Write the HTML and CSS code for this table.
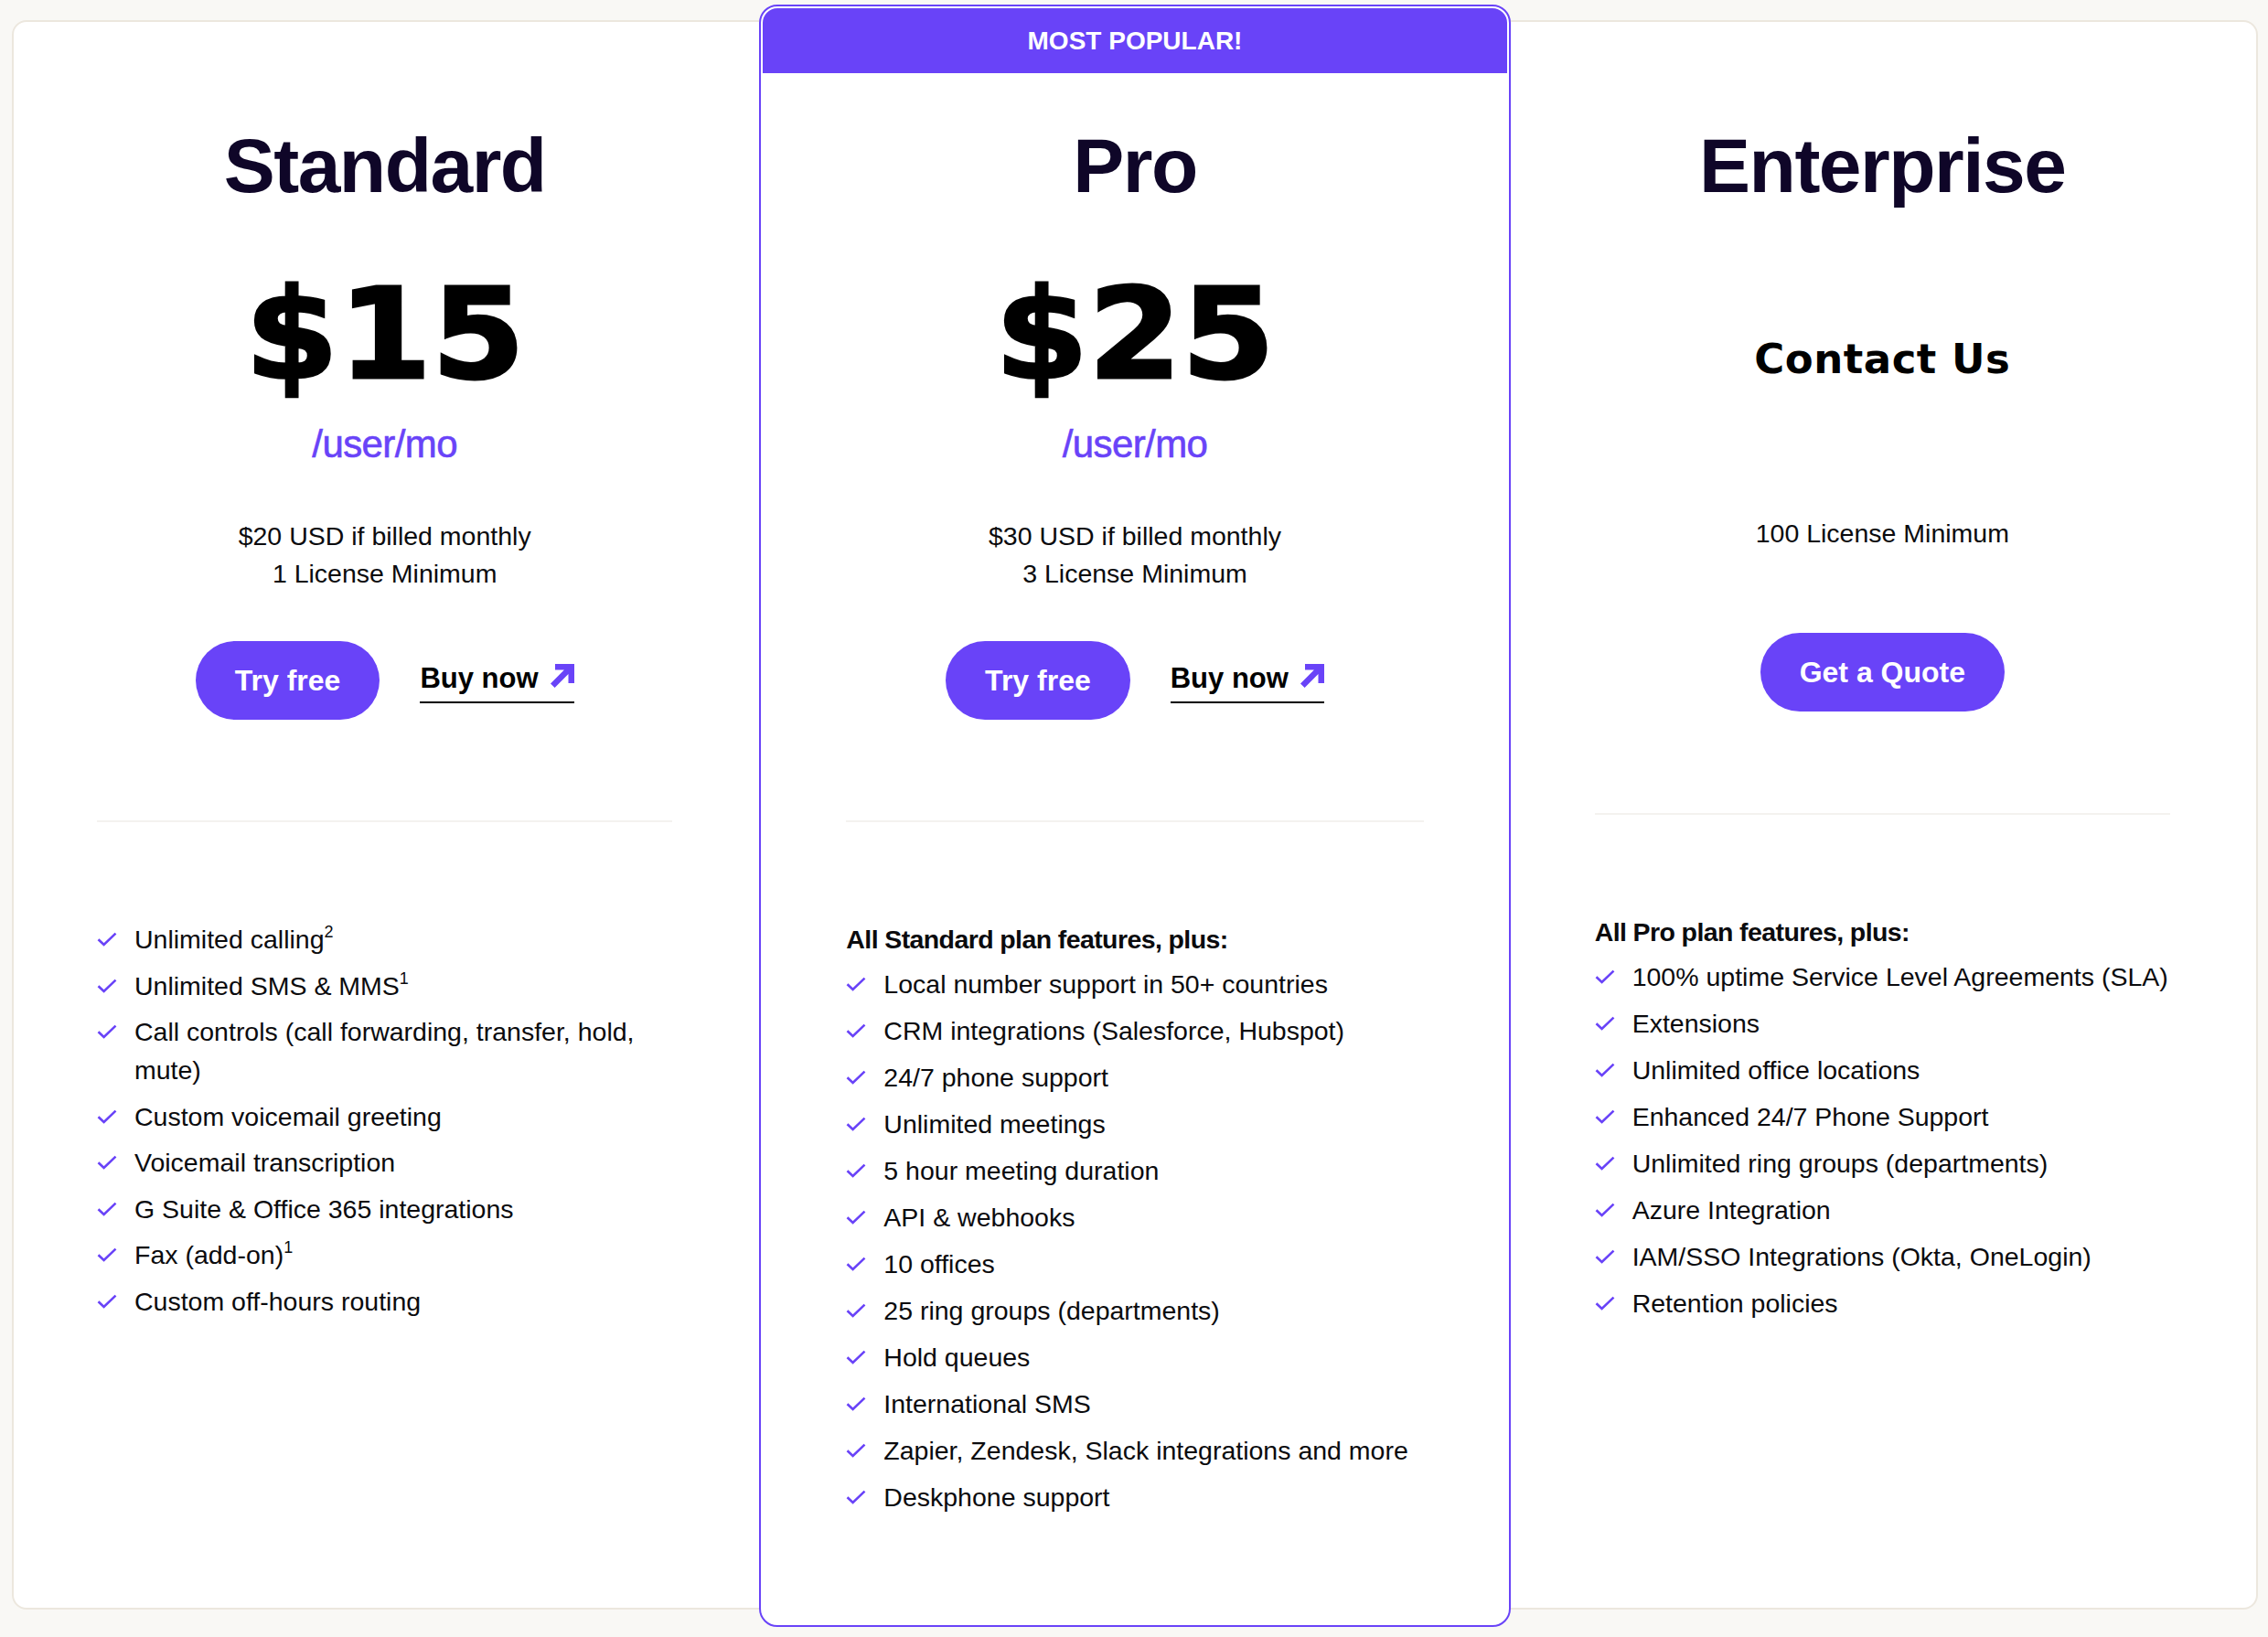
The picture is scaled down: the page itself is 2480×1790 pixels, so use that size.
FILE: index.html
```html
<!DOCTYPE html>
<html lang="en">
<head>
<meta charset="utf-8">
<title>Pricing</title>
<link rel="stylesheet" href="styles.css">
</head>
<body>
<div class="page">
  <div class="plans">
    <section class="plan plan--standard">
      <div class="plan-body">
        <h2 class="plan-name">Standard</h2>
        <div class="price">$15</div>
        <div class="unit">/user/mo</div>
        <p class="billing">$20 USD if billed monthly<br>1 License Minimum</p>
        <div class="actions">
          <a class="btn" href="#">Try free</a>
          <a class="buy" href="#">Buy now <svg class="arrow" viewBox="0 0 26 26" width="26" height="26"><polygon points="5,0 26,0 26,21 19.5,21 19.5,11.1 4.6,26 0,21.4 14.9,6.5 5,6.5" fill="#6943f8"/></svg></a>
        </div>
        <hr class="divider">
        <ul class="features">
          <li><svg class="check" viewBox="0 0 22 16" width="22" height="16"><path d="M1.5 8.2 L7.6 14 L20.5 1.6" fill="none" stroke="#6943f8" stroke-width="2.6"/></svg><span>Unlimited calling<sup>2</sup></span></li>
          <li><svg class="check" viewBox="0 0 22 16" width="22" height="16"><path d="M1.5 8.2 L7.6 14 L20.5 1.6" fill="none" stroke="#6943f8" stroke-width="2.6"/></svg><span>Unlimited SMS &amp; MMS<sup>1</sup></span></li>
          <li><svg class="check" viewBox="0 0 22 16" width="22" height="16"><path d="M1.5 8.2 L7.6 14 L20.5 1.6" fill="none" stroke="#6943f8" stroke-width="2.6"/></svg><span>Call controls (call forwarding, transfer, hold, mute)</span></li>
          <li><svg class="check" viewBox="0 0 22 16" width="22" height="16"><path d="M1.5 8.2 L7.6 14 L20.5 1.6" fill="none" stroke="#6943f8" stroke-width="2.6"/></svg><span>Custom voicemail greeting</span></li>
          <li><svg class="check" viewBox="0 0 22 16" width="22" height="16"><path d="M1.5 8.2 L7.6 14 L20.5 1.6" fill="none" stroke="#6943f8" stroke-width="2.6"/></svg><span>Voicemail transcription</span></li>
          <li><svg class="check" viewBox="0 0 22 16" width="22" height="16"><path d="M1.5 8.2 L7.6 14 L20.5 1.6" fill="none" stroke="#6943f8" stroke-width="2.6"/></svg><span>G Suite &amp; Office 365 integrations</span></li>
          <li><svg class="check" viewBox="0 0 22 16" width="22" height="16"><path d="M1.5 8.2 L7.6 14 L20.5 1.6" fill="none" stroke="#6943f8" stroke-width="2.6"/></svg><span>Fax (add-on)<sup>1</sup></span></li>
          <li><svg class="check" viewBox="0 0 22 16" width="22" height="16"><path d="M1.5 8.2 L7.6 14 L20.5 1.6" fill="none" stroke="#6943f8" stroke-width="2.6"/></svg><span>Custom off-hours routing</span></li>
        </ul>
      </div>
    </section>

    <section class="plan plan--pro">
      <div class="badge">MOST POPULAR!</div>
      <div class="plan-body">
        <h2 class="plan-name">Pro</h2>
        <div class="price">$25</div>
        <div class="unit">/user/mo</div>
        <p class="billing">$30 USD if billed monthly<br>3 License Minimum</p>
        <div class="actions">
          <a class="btn" href="#">Try free</a>
          <a class="buy" href="#">Buy now <svg class="arrow" viewBox="0 0 26 26" width="26" height="26"><polygon points="5,0 26,0 26,21 19.5,21 19.5,11.1 4.6,26 0,21.4 14.9,6.5 5,6.5" fill="#6943f8"/></svg></a>
        </div>
        <hr class="divider">
        <p class="features-title">All Standard plan features, plus:</p>
        <ul class="features">
          <li><svg class="check" viewBox="0 0 22 16" width="22" height="16"><path d="M1.5 8.2 L7.6 14 L20.5 1.6" fill="none" stroke="#6943f8" stroke-width="2.6"/></svg><span>Local number support in 50+ countries</span></li>
          <li><svg class="check" viewBox="0 0 22 16" width="22" height="16"><path d="M1.5 8.2 L7.6 14 L20.5 1.6" fill="none" stroke="#6943f8" stroke-width="2.6"/></svg><span>CRM integrations (Salesforce, Hubspot)</span></li>
          <li><svg class="check" viewBox="0 0 22 16" width="22" height="16"><path d="M1.5 8.2 L7.6 14 L20.5 1.6" fill="none" stroke="#6943f8" stroke-width="2.6"/></svg><span>24/7 phone support</span></li>
          <li><svg class="check" viewBox="0 0 22 16" width="22" height="16"><path d="M1.5 8.2 L7.6 14 L20.5 1.6" fill="none" stroke="#6943f8" stroke-width="2.6"/></svg><span>Unlimited meetings</span></li>
          <li><svg class="check" viewBox="0 0 22 16" width="22" height="16"><path d="M1.5 8.2 L7.6 14 L20.5 1.6" fill="none" stroke="#6943f8" stroke-width="2.6"/></svg><span>5 hour meeting duration</span></li>
          <li><svg class="check" viewBox="0 0 22 16" width="22" height="16"><path d="M1.5 8.2 L7.6 14 L20.5 1.6" fill="none" stroke="#6943f8" stroke-width="2.6"/></svg><span>API &amp; webhooks</span></li>
          <li><svg class="check" viewBox="0 0 22 16" width="22" height="16"><path d="M1.5 8.2 L7.6 14 L20.5 1.6" fill="none" stroke="#6943f8" stroke-width="2.6"/></svg><span>10 offices</span></li>
          <li><svg class="check" viewBox="0 0 22 16" width="22" height="16"><path d="M1.5 8.2 L7.6 14 L20.5 1.6" fill="none" stroke="#6943f8" stroke-width="2.6"/></svg><span>25 ring groups (departments)</span></li>
          <li><svg class="check" viewBox="0 0 22 16" width="22" height="16"><path d="M1.5 8.2 L7.6 14 L20.5 1.6" fill="none" stroke="#6943f8" stroke-width="2.6"/></svg><span>Hold queues</span></li>
          <li><svg class="check" viewBox="0 0 22 16" width="22" height="16"><path d="M1.5 8.2 L7.6 14 L20.5 1.6" fill="none" stroke="#6943f8" stroke-width="2.6"/></svg><span>International SMS</span></li>
          <li><svg class="check" viewBox="0 0 22 16" width="22" height="16"><path d="M1.5 8.2 L7.6 14 L20.5 1.6" fill="none" stroke="#6943f8" stroke-width="2.6"/></svg><span>Zapier, Zendesk, Slack integrations and more</span></li>
          <li><svg class="check" viewBox="0 0 22 16" width="22" height="16"><path d="M1.5 8.2 L7.6 14 L20.5 1.6" fill="none" stroke="#6943f8" stroke-width="2.6"/></svg><span>Deskphone support</span></li>
        </ul>
      </div>
    </section>

    <section class="plan plan--enterprise">
      <div class="plan-body">
        <h2 class="plan-name">Enterprise</h2>
        <div class="contact">Contact Us</div>
        <p class="billing billing--ent">100 License Minimum</p>
        <div class="actions actions--ent">
          <a class="btn" href="#">Get a Quote</a>
        </div>
        <hr class="divider divider--ent">
        <p class="features-title">All Pro plan features, plus:</p>
        <ul class="features">
          <li><svg class="check" viewBox="0 0 22 16" width="22" height="16"><path d="M1.5 8.2 L7.6 14 L20.5 1.6" fill="none" stroke="#6943f8" stroke-width="2.6"/></svg><span>100% uptime Service Level Agreements (SLA)</span></li>
          <li><svg class="check" viewBox="0 0 22 16" width="22" height="16"><path d="M1.5 8.2 L7.6 14 L20.5 1.6" fill="none" stroke="#6943f8" stroke-width="2.6"/></svg><span>Extensions</span></li>
          <li><svg class="check" viewBox="0 0 22 16" width="22" height="16"><path d="M1.5 8.2 L7.6 14 L20.5 1.6" fill="none" stroke="#6943f8" stroke-width="2.6"/></svg><span>Unlimited office locations</span></li>
          <li><svg class="check" viewBox="0 0 22 16" width="22" height="16"><path d="M1.5 8.2 L7.6 14 L20.5 1.6" fill="none" stroke="#6943f8" stroke-width="2.6"/></svg><span>Enhanced 24/7 Phone Support</span></li>
          <li><svg class="check" viewBox="0 0 22 16" width="22" height="16"><path d="M1.5 8.2 L7.6 14 L20.5 1.6" fill="none" stroke="#6943f8" stroke-width="2.6"/></svg><span>Unlimited ring groups (departments)</span></li>
          <li><svg class="check" viewBox="0 0 22 16" width="22" height="16"><path d="M1.5 8.2 L7.6 14 L20.5 1.6" fill="none" stroke="#6943f8" stroke-width="2.6"/></svg><span>Azure Integration</span></li>
          <li><svg class="check" viewBox="0 0 22 16" width="22" height="16"><path d="M1.5 8.2 L7.6 14 L20.5 1.6" fill="none" stroke="#6943f8" stroke-width="2.6"/></svg><span>IAM/SSO Integrations (Okta, OneLogin)</span></li>
          <li><svg class="check" viewBox="0 0 22 16" width="22" height="16"><path d="M1.5 8.2 L7.6 14 L20.5 1.6" fill="none" stroke="#6943f8" stroke-width="2.6"/></svg><span>Retention policies</span></li>
        </ul>
      </div>
    </section>
  </div>
</div>
</body>
</html>
```

FILE: styles.css
```css
* { box-sizing: border-box; }

html, body { margin: 0; padding: 0; }

body {
  background: #f9f8f5;
  font-family: "Liberation Sans", Arial, sans-serif;
  color: #0b0b0e;
}

.page {
  padding: 22px 11px 20px 13px;
}

.plans {
  display: grid;
  grid-template-columns: repeat(3, 1fr);
  background: #ffffff;
  border: 2px solid #ece7de;
  border-radius: 16px;
}

.plan {
  display: flex;
  flex-direction: column;
}

.plan-body {
  display: flex;
  flex-direction: column;
  align-items: center;
  padding: 115px 94px 0;
}

.plan--standard .plan-body {
  padding-left: 91px;
  padding-right: 97px;
}

.plan--pro {
  margin: -19px -2px -21px;
  border: 2px solid #6943f8;
  border-radius: 20px;
  background: #ffffff;
  overflow: hidden;
}

.plan--pro .plan-body {
  padding: 59px 93px 119px;
}

.badge {
  margin: 2px 2px 0;
  height: 71px;
  background: #6943f8;
  color: #ffffff;
  font-weight: 700;
  font-size: 28px;
  display: flex;
  align-items: center;
  justify-content: center;
  border-radius: 16px 16px 0 0;
}

.plan-name {
  margin: 0;
  font-size: 84px;
  line-height: 84px;
  font-weight: 700;
  letter-spacing: -1.5px;
  color: #0f0628;
}

.price {
  margin-top: 74px;
  font-family: "DejaVu Sans", sans-serif;
  font-weight: 700;
  font-size: 137px;
  line-height: 137px;
  letter-spacing: 0;
  color: #000000;
  -webkit-text-stroke: 3px #000000;
  transform: scaleX(1.07);
}

.unit {
  margin-top: 31px;
  font-size: 42px;
  line-height: 42px;
  letter-spacing: -0.6px;
  color: #6943f8;
  -webkit-text-stroke: 0.6px #6943f8;
}

.billing {
  margin: 59px 0 0;
  font-size: 28.5px;
  line-height: 41px;
  text-align: center;
}

.contact {
  margin-top: 147px;
  font-family: "DejaVu Sans", sans-serif;
  font-weight: 700;
  font-size: 45px;
  line-height: 45px;
  letter-spacing: 0.5px;
  color: #000000;
}

.billing--ent {
  margin-top: 148px;
}

.actions {
  margin-top: 53px;
  display: flex;
  align-items: flex-start;
  gap: 44px;
}

.actions--ent {
  margin-top: 88px;
}

.btn {
  height: 86px;
  padding: 0 43px;
  border-radius: 43px;
  background: #6943f8;
  color: #ffffff;
  font-weight: 700;
  font-size: 32px;
  text-decoration: none;
  display: flex;
  align-items: center;
}

.buy {
  margin-top: 24px;
  display: flex;
  align-items: center;
  gap: 13px;
  font-weight: 700;
  font-size: 31px;
  line-height: 34px;
  color: #000000;
  text-decoration: none;
  padding-bottom: 8px;
  border-bottom: 2.5px solid #000000;
}

.arrow {
  display: block;
  margin-top: -6px;
}

.divider {
  align-self: stretch;
  margin: 110px 0 0;
  border: 0;
  height: 2px;
  background: #f4f2ef;
}

.divider--ent {
  margin-top: 111px;
}

.features-title {
  align-self: stretch;
  margin: 107px 0 7px;
  font-weight: 700;
  font-size: 28.5px;
  line-height: 42px;
  letter-spacing: -0.6px;
}

.features {
  align-self: stretch;
  list-style: none;
  margin: 0 -20px 0 0;
  padding: 0;
  font-size: 28.5px;
  line-height: 42px;
}

.divider + .features {
  margin-top: 107px;
}

.features li {
  display: flex;
  align-items: flex-start;
  gap: 19px;
  padding-right: 20px;
}

.features li + li {
  margin-top: 9px;
}

.plan--standard .features li + li {
  margin-top: 8.5px;
}

.check {
  flex: none;
  margin-top: 13px;
}

sup {
  font-size: 18px;
  line-height: 0;
  vertical-align: 12px;
}
```
